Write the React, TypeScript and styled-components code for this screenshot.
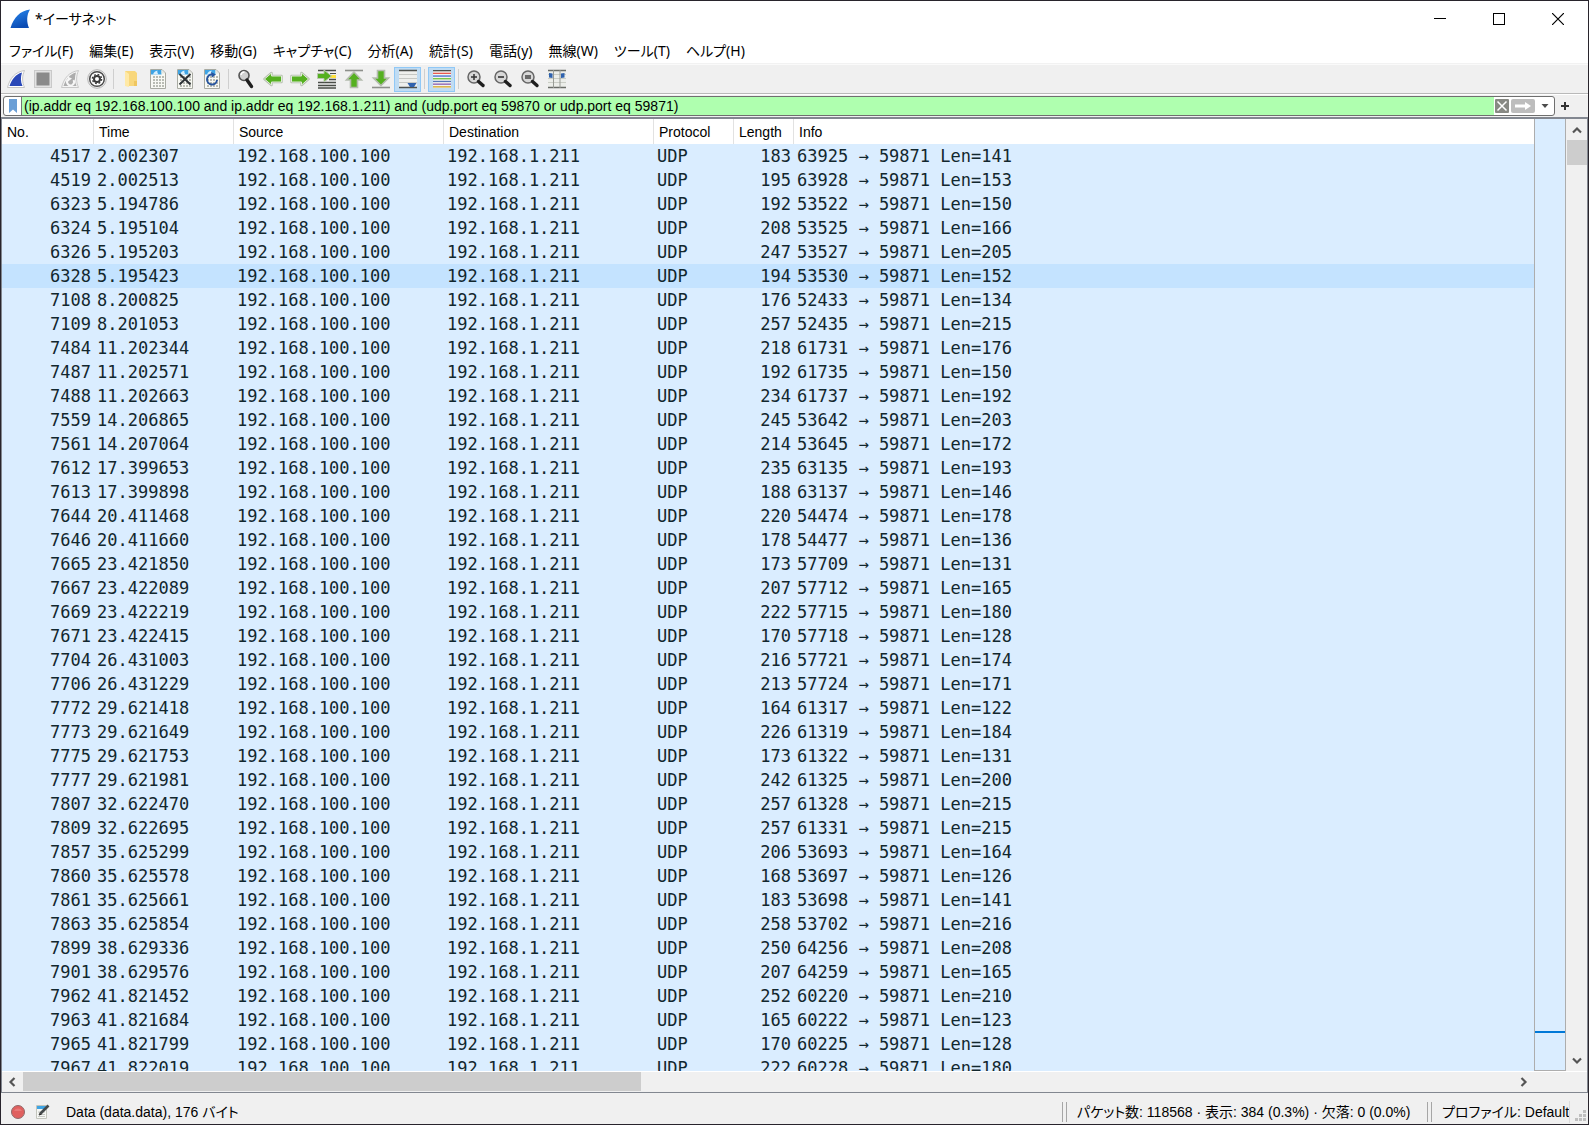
import React from "react";
import styled, { createGlobalStyle } from "styled-components";

const UI = `"Liberation Sans", "Noto Sans CJK JP", sans-serif`;
const MENU = `"Noto Sans", "Noto Sans CJK JP", sans-serif`;
const MONO = `"DejaVu Sans Mono", "Liberation Mono", monospace`;

const Global = createGlobalStyle`
  *, *::before, *::after { box-sizing: border-box; }
  html, body { margin: 0; height: 100%; }
  #root { height: 100%; }
  body { overflow: hidden; background: #f0f0f0; color: #000; }
  button { border: 0; padding: 0; margin: 0; background: none; color: inherit; font: inherit; }
`;

const Window = styled.main`
  display: flex;
  flex-direction: column;
  height: 100vh;
  border: 1px solid #28242c;
  background: #f0f0f0;
  font: 14px/20px ${UI};
`;

const TitleBar = styled.header`
  display: flex;
  align-items: center;
  height: 37px;
  padding: 0 1px 2px 9px;
  background: #fff;
`;

const Title = styled.h1`
  flex: 1;
  margin: 0 0 0 5px;
  font: 400 14px/20px ${MENU};
  font-feature-settings: "palt";
`;

const CaptionButton = styled.button`
  display: flex;
  align-items: center;
  justify-content: center;
  width: 59px;
  height: 35px;
`;

const MenuBar = styled.nav`
  display: flex;
  gap: 16px;
  height: 26px;
  padding-left: 8px;
  background: #fff;
  border-bottom: 1px solid #f2f2f2;
`;

const MenuItem = styled.button`
  font: 14px/25px ${MENU};
  font-feature-settings: "palt";
  white-space: nowrap;
`;

const ToolBar = styled.div`
  display: flex;
  align-items: center;
  height: 30px;
  padding-left: 1px;
  border-top: 1px solid #fafafa;
  border-bottom: 1px solid #b9b9b9;
`;

const Tool = styled.button<{ $on?: boolean }>`
  display: flex;
  align-items: center;
  justify-content: center;
  width: 27px;
  height: 25px;
  border: 1px solid ${(p) => (p.$on ? "#90c8f6" : "transparent")};
  background: ${(p) => (p.$on ? "#c0dcf3" : "transparent")};
`;

const ToolGap = styled.span`
  width: 1px;
  height: 20px;
  margin: 0 3px;
  background: #cfcfcf;
`;

const FilterBar = styled.form`
  display: flex;
  align-items: center;
  height: 23px;
  padding: 0 19px 0 2px;
  border-top: 1px solid #fff;
`;

const FilterField = styled.div`
  display: flex;
  flex: 1;
  align-items: center;
  height: 20px;
  margin-right: 6px;
  border: 1px solid #6f6f6f;
  border-radius: 3px;
  background: #fff;
  overflow: hidden;
`;

const Bookmark = styled.button`
  display: flex;
  align-items: center;
  justify-content: center;
  width: 18px;
  height: 18px;
  border-right: 1px solid #777;
`;

const FilterInput = styled.input`
  flex: 1;
  min-width: 0;
  height: 18px;
  padding: 0 2px;
  border: 0;
  outline: 0;
  background: #afffaf;
  color: #000;
  font: 14px/18px ${UI};
`;

const FieldButton = styled.button<{ $w: number }>`
  display: flex;
  align-items: center;
  justify-content: center;
  width: ${(p) => p.$w}px;
  height: 18px;
`;

const Body = styled.section`
  display: flex;
  flex: 1;
  flex-direction: column;
  min-height: 0;
  border: 1px solid #828790;
  border-top: 2px solid #828790;
`;

const Upper = styled.div`
  display: flex;
  flex: 1;
  min-height: 0;
`;

const Packets = styled.div`
  flex: 1;
  min-width: 0;
  overflow: hidden;
  background: #daedff;
`;

const Table = styled.table`
  width: 100%;
  table-layout: fixed;
  border-collapse: separate;
  border-spacing: 0;
`;

const Head = styled.th<{ $w?: number }>`
  width: ${(p) => (p.$w ? `${p.$w}px` : "auto")};
  height: 25px;
  padding: 0 0 0 5px;
  border-right: ${(p) => (p.$w ? "1px solid #e2e2e2" : "0")};
  background: #fff;
  font: 400 14px/20px ${UI};
  text-align: left;
  white-space: nowrap;
`;

const Row = styled.tr<{ $selected: boolean }>`
  background: ${(p) => (p.$selected ? "#c4e3ff" : "#daedff")};
`;

const Cell = styled.td<{ $num?: boolean }>`
  height: 24px;
  padding: 0 3px;
  color: #12272e;
  font: 17px/24px ${MONO};
  text-align: ${(p) => (p.$num ? "right" : "left")};
  white-space: pre;
  overflow: hidden;
`;

const MiniMap = styled.div`
  display: flex;
  flex-direction: column;
  width: 32px;
  margin-right: 1px;
  border: 1px solid #adadad;
  border-top: 0;
  background: #daedff;
`;

const MapSpace = styled.span<{ $grow: number }>`
  flex: ${(p) => p.$grow};
`;

const MapMark = styled.span`
  height: 2px;
  background: #0078d7;
`;

const VScroll = styled.div`
  display: flex;
  flex-direction: column;
  width: 20px;
  background: #f0f0f0;
`;

const HScroll = styled.div`
  display: flex;
  height: 21px;
  padding-right: 53px;
  border-top: 1px solid #fff;
  background: #f0f0f0;
`;

const ScrollButton = styled.button<{ $vertical?: boolean }>`
  display: flex;
  flex: none;
  align-items: center;
  justify-content: center;
  width: ${(p) => (p.$vertical ? 20 : 21)}px;
  height: ${(p) => (p.$vertical ? 21 : 20)}px;
`;

const ScrollTrack = styled.div<{ $vertical?: boolean }>`
  display: flex;
  flex-direction: ${(p) => (p.$vertical ? "column" : "row")};
  flex: 1;
`;

const ScrollThumb = styled.span<{ $size: string; $vertical?: boolean }>`
  width: ${(p) => (p.$vertical ? "100%" : p.$size)};
  height: ${(p) => (p.$vertical ? p.$size : "19px")};
  background: #cdcdcd;
`;

const StatusBar = styled.footer`
  display: flex;
  align-items: center;
  height: 31px;
  padding: 6px 2px 0 9px;
  white-space: nowrap;
  font-feature-settings: "palt";
`;

const StatusIcon = styled.button`
  display: flex;
  width: 24px;
  height: 20px;
  align-items: center;
`;

const StatusText = styled.span`
  flex: 1;
  padding-left: 8px;
`;

const StatusPart = styled.span<{ $w: number }>`
  display: flex;
  align-items: center;
  width: ${(p) => p.$w}px;
  height: 20px;
`;

const Grip = styled.span`
  flex: none;
  width: 5px;
  height: 20px;
  margin-right: 10px;
  border: 1px solid #a6a6a6;
  border-width: 0 1px;
`;

const Corner = styled.span`
  display: flex;
  align-items: flex-end;
  justify-content: flex-end;
  width: 17px;
  height: 22px;
  padding-bottom: 2px;
  border-left: 1px solid #dcdcdc;
`;

/* ---------- icons ---------- */

const Svg = ({ w = 20, h = 20, children }: { w?: number; h?: number; children: React.ReactNode }) => (
  <svg width={w} height={h} viewBox={`0 0 ${w} ${h}`} aria-hidden="true">{children}</svg>
);

const AppIcon = () => (
  <Svg w={20} h={20}>
    <defs>
      <linearGradient id="fin" x1="0" y1="0" x2="0.4" y2="1">
        <stop offset="0" stopColor="#2a8af0" /><stop offset="1" stopColor="#0b4cb4" />
      </linearGradient>
    </defs>
    <path d="M0.500 19C4 8 10 2 20 0.500C16.500 6 16.500 13 19 19Z" fill="url(#fin)" />
  </Svg>
);

const FinIcon = () => (
  <Svg>
    <path d="M1.500 18.500C4 9 9 3 18.500 1.500C16 7 16 13 18.500 18.500Z" fill="#fff" stroke="#c4c4c4" />
    <path d="M3.500 17C6 10 9.500 5.500 16 3.500C14.500 8 14.500 12.500 16.500 17Z" fill="#2a48b8" />
  </Svg>
);

const StopIcon = () => (
  <Svg>
    <rect x="1.500" y="1.500" width="17" height="17" fill="#e2e2e2" stroke="#c9c9c9" />
    <rect x="3.500" y="3.500" width="13" height="13" fill="#8a8a8a" />
  </Svg>
);

const RestartIcon = () => (
  <Svg>
    <path d="M1.500 18.500C4 9 9 3 18.500 1.500C16 7 16 13 18.500 18.500Z" fill="#f4f4f4" stroke="#c8c8c8" />
    <path d="M3.500 17C6 10 9.500 5.500 16 3.500C14.500 8 14.500 12.500 16.500 17Z" fill="#adadad" />
    <path d="M8 10.500A3.500 3.500 0 1 0 13.500 11" fill="none" stroke="#f6f6f6" strokeWidth="2" />
    <path d="M7.500 7.500L12 9.500L8 12.500Z" fill="#f6f6f6" />
  </Svg>
);

const GearIcon = () => (
  <Svg>
    <circle cx="10" cy="10" r="9.300" fill="#f0f0f0" stroke="#b4b4b4" />
    <circle cx="10" cy="10" r="7.300" fill="#fff" stroke="#4a4a4a" strokeWidth="1.500" />
    <circle cx="10" cy="10" r="3" fill="none" stroke="#3a3a3a" strokeWidth="2" />
    <circle cx="10" cy="10" r="4.600" fill="none" stroke="#3a3a3a" strokeWidth="1.400" strokeDasharray="1.800 1.812" />
  </Svg>
);

const FolderIcon = () => (
  <Svg>
    <path d="M4 2H14L16 4V17H4Z" fill="#f8d77c" />
    <path d="M4 2L8 5V18L4 17Z" fill="#ffe9a6" />
    <path d="M13 12H16V17H13Z" fill="#efc660" />
  </Svg>
);

const DocBase = () => (
  <>
    <path d="M2.500 0.500H14L17.500 4V19.500H2.500Z" fill="#f8f9f4" stroke="#a8aaa2" />
    <path d="M3 1H13.500V5.500H3Z" fill="#3fa4e4" />
    <path d="M5 5.500C6 2.500 8 2 9.500 1.500C9 3 9.500 4 10.500 5.500Z" fill="#d9effc" />
    <path d="M13.500 1V4.500H17Z" fill="#e4e6e0" />
  </>
);

const dots = [7, 10, 13, 16].flatMap((y) => [5, 8, 11, 14].map((x) => <rect key={`${x}-${y}`} x={x} y={y} width="2" height="2" fill="#b9bcb4" />));

const DocIcon = () => <Svg><DocBase />{dots}</Svg>;
const DocCloseIcon = () => (
  <Svg><DocBase />{dots}<path d="M4.500 5L15.500 15.500M15.500 5L4.500 15.500" stroke="#2d3236" strokeWidth="2" /></Svg>
);
const DocReloadIcon = () => (
  <Svg>
    <DocBase />{dots}
    <path d="M10.500 5.500A5 5 0 1 0 15 11" fill="none" stroke="#27559e" strokeWidth="2" />
    <path d="M9 3L14 5.500L10 8.500Z" fill="#27559e" />
  </Svg>
);

const FindIcon = () => (
  <Svg>
    <circle cx="8" cy="6.500" r="5" fill="#d0d0d0" stroke="#555" strokeWidth="1.600" />
    <path d="M5 6A3.500 3.500 0 0 1 8.500 3" fill="none" stroke="#fff" strokeWidth="1.400" />
    <path d="M11 11L15.500 17.500" stroke="#1f1f1f" strokeWidth="3.400" strokeLinecap="round" />
  </Svg>
);

const ARROW = "M1.500 10L8.500 4V7H18.500V13H8.500V16Z";
const ArrowShape = () => (
  <>
    <path d={ARROW} fill="none" stroke="#b4bcae" strokeWidth="2.400" strokeLinejoin="round" />
    <path d={ARROW} fill="#55b020" stroke="#e0ecd8" />
  </>
);
const LeftIcon = () => <Svg><ArrowShape /></Svg>;
const RightIcon = () => <Svg><g transform="rotate(180 10 10)"><ArrowShape /></g></Svg>;

const GotoIcon = () => (
  <Svg>
    <path d="M1 1.500H19M1 13.500H19M1 16.500H19M1 19H19M12 10.500H19" stroke="#4a4d48" strokeWidth="1.400" />
    <path d="M13 4.500H19" stroke="#4a4d48" />
    <rect x="13" y="6" width="6" height="3" fill="#ffe13c" />
    <path d="M0.500 4.500H7V1L14.500 7L7 13V9.500H0.500Z" fill="#55b020" stroke="#b8c6ae" />
  </Svg>
);
const TopIcon = () => (
  <Svg>
    <path d="M1 1.500H19" stroke="#8d8f8b" strokeWidth="1.600" />
    <path d="M10 3L17.500 11H13.500V18.500H6.500V11H2.500Z" fill="#55b020" stroke="#b4bcae" strokeWidth="1.600" />
  </Svg>
);
const BottomIcon = () => (
  <Svg>
    <path d="M1 18.500H19" stroke="#8d8f8b" strokeWidth="1.600" />
    <path d="M10 16.500L17.500 9H13.500V1.500H6.500V9H2.500Z" fill="#55b020" stroke="#b4bcae" strokeWidth="1.600" />
  </Svg>
);

const AutoScrollIcon = () => (
  <Svg>
    <rect x="1" y="1" width="18" height="18" fill="#eeefec" />
    <path d="M1 1.500H19M1 18.500H19" stroke="#4f524e" strokeWidth="1.400" />
    <path d="M1 5.500H19M1 9.500H19M1 13.500H19" stroke="#c6c8c4" />
    <path d="M9.500 14H18.500L16 18H12Z" fill="#2f62ae" />
  </Svg>
);

const ColorizeIcon = () => (
  <Svg>
    <rect x="1" y="1" width="18" height="18" fill="#f4f4f1" />
    {["#4f524e", "#e85a50", "#3f6ad0", "#6cc23a", "#5376b8", "#8a5db0", "#d4a628"].map((c, i) => (
      <rect key={c} x="1" y={1 + i * 2.7} width="18" height="1.300" fill={c} />
    ))}
  </Svg>
);

const ZoomIcon = ({ kind }: { kind: "in" | "out" | "normal" }) => (
  <Svg>
    <circle cx="8" cy="8" r="6" fill="#d8d8d8" stroke="#666" strokeWidth="1.500" />
    <path d="M12.500 12.500L17 16.500" stroke="#1f1f1f" strokeWidth="3.400" strokeLinecap="round" />
    {kind === "in" && <path d="M5 8H11M8 5V11" stroke="#333" strokeWidth="1.500" />}
    {kind === "out" && <path d="M5 8H11" stroke="#333" strokeWidth="1.600" />}
    {kind === "normal" && <path d="M5 7H11M5 9H11" stroke="#444" strokeWidth="1.600" />}
  </Svg>
);

const ColumnsIcon = () => (
  <Svg>
    <rect x="1" y="1" width="18" height="18" fill="#eceeea" />
    <path d="M1 5.500H19M1 9.500H19M1 13.500H19" stroke="#cacdc6" />
    <path d="M1 1.500H19M1 18.500H19" stroke="#6a6d68" strokeWidth="1.400" />
    <path d="M6.500 1V19M13 1V19" stroke="#999c96" />
    <path d="M2 4L5.500 4.500V9L2 8.500ZM14 4.500L17.500 4V8.500L14 9Z" fill="#2f62ae" />
  </Svg>
);

const Chevron = ({ d }: { d: string }) => (
  <Svg w={12} h={12}><path d={d} fill="none" stroke="#555" strokeWidth="2.200" /></Svg>
);

/* ---------- data ---------- */

const menus = ["ファイル(F)", "編集(E)", "表示(V)", "移動(G)", "キャプチャ(C)", "分析(A)", "統計(S)", "電話(y)", "無線(W)", "ツール(T)", "ヘルプ(H)"];

type Entry = { name: string; icon: React.ReactNode; on?: boolean };
const tools: Entry[][] = [
  [
    { name: "開始", icon: <FinIcon /> },
    { name: "停止", icon: <StopIcon /> },
    { name: "再開始", icon: <RestartIcon /> },
    { name: "オプション", icon: <GearIcon /> },
  ],
  [
    { name: "開く", icon: <FolderIcon /> },
    { name: "保存", icon: <DocIcon /> },
    { name: "閉じる", icon: <DocCloseIcon /> },
    { name: "再読込", icon: <DocReloadIcon /> },
  ],
  [
    { name: "検索", icon: <FindIcon /> },
    { name: "前へ", icon: <LeftIcon /> },
    { name: "次へ", icon: <RightIcon /> },
    { name: "指定パケットへ", icon: <GotoIcon /> },
    { name: "最初へ", icon: <TopIcon /> },
    { name: "最後へ", icon: <BottomIcon /> },
    { name: "自動スクロール", icon: <AutoScrollIcon />, on: true },
  ],
  [{ name: "色付け", icon: <ColorizeIcon />, on: true }],
  [
    { name: "拡大", icon: <ZoomIcon kind="in" /> },
    { name: "縮小", icon: <ZoomIcon kind="out" /> },
    { name: "標準サイズ", icon: <ZoomIcon kind="normal" /> },
    { name: "列幅調整", icon: <ColumnsIcon /> },
  ],
];

const columns: [string, number?][] = [["No.", 92], ["Time", 140], ["Source", 210], ["Destination", 210], ["Protocol", 80], ["Length", 60], ["Info"]];

/* number, time, frame length, source port (payload is frame length minus 42 header bytes) */
const packets: [number, string, number, number][] = [
  [4517, "2.002307", 183, 63925],
  [4519, "2.002513", 195, 63928],
  [6323, "5.194786", 192, 53522],
  [6324, "5.195104", 208, 53525],
  [6326, "5.195203", 247, 53527],
  [6328, "5.195423", 194, 53530],
  [7108, "8.200825", 176, 52433],
  [7109, "8.201053", 257, 52435],
  [7484, "11.202344", 218, 61731],
  [7487, "11.202571", 192, 61735],
  [7488, "11.202663", 234, 61737],
  [7559, "14.206865", 245, 53642],
  [7561, "14.207064", 214, 53645],
  [7612, "17.399653", 235, 63135],
  [7613, "17.399898", 188, 63137],
  [7644, "20.411468", 220, 54474],
  [7646, "20.411660", 178, 54477],
  [7665, "23.421850", 173, 57709],
  [7667, "23.422089", 207, 57712],
  [7669, "23.422219", 222, 57715],
  [7671, "23.422415", 170, 57718],
  [7704, "26.431003", 216, 57721],
  [7706, "26.431229", 213, 57724],
  [7772, "29.621418", 164, 61317],
  [7773, "29.621649", 226, 61319],
  [7775, "29.621753", 173, 61322],
  [7777, "29.621981", 242, 61325],
  [7807, "32.622470", 257, 61328],
  [7809, "32.622695", 257, 61331],
  [7857, "35.625299", 206, 53693],
  [7860, "35.625578", 168, 53697],
  [7861, "35.625661", 183, 53698],
  [7863, "35.625854", 258, 53702],
  [7899, "38.629336", 250, 64256],
  [7901, "38.629576", 207, 64259],
  [7962, "41.821452", 252, 60220],
  [7963, "41.821684", 165, 60222],
  [7965, "41.821799", 170, 60225],
  [7967, "41.822019", 222, 60228],
];

export default function App() {
  return (
    <Window>
      <Global />
      <TitleBar>
        <AppIcon />
        <Title>*イーサネット</Title>
        <CaptionButton aria-label="最小化"><Svg w={12} h={12}><path d="M0 5.500H12" stroke="#000" /></Svg></CaptionButton>
        <CaptionButton aria-label="最大化"><Svg w={12} h={12}><rect x="0.500" y="0.500" width="11" height="11" fill="none" stroke="#000" /></Svg></CaptionButton>
        <CaptionButton aria-label="ウィンドウを閉じる"><Svg w={12} h={12}><path d="M0 0L12 12M12 0L0 12" stroke="#000" strokeWidth="1.200" /></Svg></CaptionButton>
      </TitleBar>
      <MenuBar>
        {menus.map((m) => <MenuItem key={m} type="button">{m}</MenuItem>)}
      </MenuBar>
      <ToolBar role="toolbar">
        {tools.map((group, i) => (
          <React.Fragment key={i}>
            {i > 0 && <ToolGap />}
            {group.map((t) => <Tool key={t.name} type="button" aria-label={t.name} aria-pressed={t.on} $on={t.on}>{t.icon}</Tool>)}
          </React.Fragment>
        ))}
      </ToolBar>
      <FilterBar>
        <FilterField>
          <Bookmark type="button" aria-label="ブックマーク">
            <Svg w={10} h={14}><path d="M1 0H9V14L5 10.500L1 14Z" fill="#6b9fd6" /></Svg>
          </Bookmark>
          <FilterInput
            aria-label="表示フィルタ"
            spellCheck={false}
            defaultValue="(ip.addr eq 192.168.100.100 and ip.addr eq 192.168.1.211) and (udp.port eq 59870 or udp.port eq 59871)"
          />
          <FieldButton type="button" aria-label="クリア" $w={16}>
            <Svg w={14} h={14}>
              <rect width="14" height="14" rx="1" fill="#888984" />
              <path d="M2.500 2.500L11.500 11.500M11.500 2.500L2.500 11.500" stroke="#fff" strokeWidth="1.500" />
            </Svg>
          </FieldButton>
          <FieldButton type="button" aria-label="適用" $w={26}>
            <Svg w={24} h={14}>
              <rect width="24" height="14" rx="2" fill="#bdbdbd" />
              <path d="M4 5.500H14V3L20 7L14 11V8.500H4Z" fill="#fff" />
            </Svg>
          </FieldButton>
          <FieldButton type="button" aria-label="履歴" $w={18}>
            <Svg w={8} h={6}><path d="M0.500 1H7.500L4 5Z" fill="#4c4c4c" /></Svg>
          </FieldButton>
        </FilterField>
        <FieldButton type="button" aria-label="フィルタを追加" $w={8}>
          <Svg w={8} h={8}><path d="M0 4H8M4 0V8" stroke="#333" strokeWidth="2" /></Svg>
        </FieldButton>
      </FilterBar>
      <Body>
        <Upper>
          <Packets>
            <Table>
              <thead>
                <tr>{columns.map(([name, w]) => <Head key={name} $w={w} scope="col">{name}</Head>)}</tr>
              </thead>
              <tbody>
                {packets.map(([no, time, len, port]) => (
                  <Row key={no} $selected={no === 6328}>
                    <Cell $num>{no}</Cell>
                    <Cell>{time}</Cell>
                    <Cell>192.168.100.100</Cell>
                    <Cell>192.168.1.211</Cell>
                    <Cell>UDP</Cell>
                    <Cell $num>{len}</Cell>
                    <Cell>{`${port} → 59871 Len=${len - 42}`}</Cell>
                  </Row>
                ))}
              </tbody>
            </Table>
          </Packets>
          <MiniMap>
            <MapSpace $grow={912} />
            <MapMark />
            <MapSpace $grow={37} />
          </MiniMap>
          <VScroll>
            <ScrollButton $vertical aria-label="上へ"><Chevron d="M2 8.500L6 4.500L10 8.500" /></ScrollButton>
            <ScrollTrack $vertical><ScrollThumb $vertical $size="25px" /></ScrollTrack>
            <ScrollButton $vertical aria-label="下へ"><Chevron d="M2 3.500L6 7.500L10 3.500" /></ScrollButton>
          </VScroll>
        </Upper>
        <HScroll>
          <ScrollButton aria-label="左へ"><Chevron d="M7.500 2L3.500 6L7.500 10" /></ScrollButton>
          <ScrollTrack><ScrollThumb $size="41.500%" /></ScrollTrack>
          <ScrollButton aria-label="右へ"><Chevron d="M3.500 2L7.500 6L3.500 10" /></ScrollButton>
        </HScroll>
      </Body>
      <StatusBar>
        <StatusIcon aria-label="エキスパート情報">
          <Svg w={16} h={16}>
            <circle cx="8" cy="8" r="6.500" fill="#e0605f" stroke="#8f6a6a" />
            <path d="M4 7A4.500 4.500 0 0 1 12 7Z" fill="#ec8b89" opacity="0.600" />
          </Svg>
        </StatusIcon>
        <StatusIcon aria-label="コメント">
          <Svg w={16} h={16}>
            <path d="M2.500 1.500H12.500V14.500H2.500Z" fill="#f6f7f4" stroke="#c2c4bc" />
            <path d="M3 2H12V5H3Z" fill="#3fa4e4" />
            <path d="M4 8H11M4 10.500H11M4 12.500H11" stroke="#c6c8c4" />
            <path d="M6.500 9.500L14.500 1.500" stroke="#454a4c" strokeWidth="2.600" />
            <path d="M5 11.500L5.500 8.500L7.800 10.500Z" fill="#222" />
          </Svg>
        </StatusIcon>
        <StatusText>Data (data.data), 176 バイト</StatusText>
        <StatusPart $w={365}><Grip />パケット数: 118568 · 表示: 384 (0.3%) · 欠落: 0 (0.0%)</StatusPart>
        <StatusPart $w={142}><Grip />プロファイル: Default</StatusPart>
        <Corner>
          <Svg w={11} h={11}>
            {[[8, 0], [4, 4], [8, 4], [0, 8], [4, 8], [8, 8]].map(([x, y]) => <rect key={`${x}-${y}`} x={x} y={y} width="3" height="3" fill="#bfbfbf" />)}
          </Svg>
        </Corner>
      </StatusBar>
    </Window>
  );
}
